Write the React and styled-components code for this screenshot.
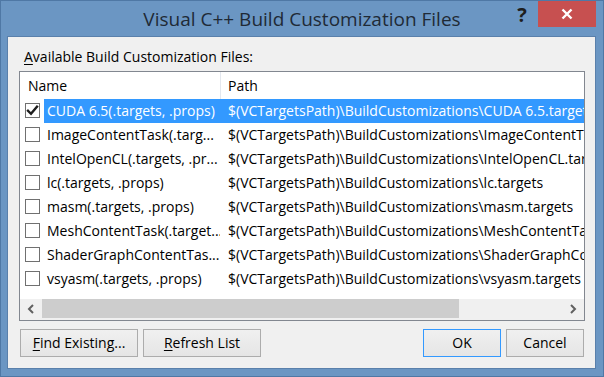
import React from 'react';
import styled, { createGlobalStyle } from 'styled-components';

const Global = createGlobalStyle`
  html, body { margin: 0; padding: 0; background: #6b96c3; }
  body { font-family: "Open Sans", "Noto Sans", sans-serif; }
  * { box-sizing: border-box; }
`;

const Window = styled.div`
  position: relative;
  width: 604px;
  height: 377px;
  background: #6b96c3;
  border: 1px solid #4f78a5;
  display: flex;
  flex-direction: column;
  overflow: hidden;
`;

const TitleBar = styled.div`
  position: relative;
  height: 35px;
  flex: none;
  display: flex;
  align-items: center;
  justify-content: center;
`;

const Title = styled.div`
  font-size: 19px;
  color: #1f2a36;
  line-height: 24px;
  padding-top: 1px;
`;

const HelpButton = styled.div`
  position: absolute;
  left: 514px;
  top: 2px;
  width: 14px;
  height: 24px;
  font-size: 20px;
  font-weight: 700;
  line-height: 24px;
  text-align: center;
  color: #1e1e1e;
`;

const CloseButton = styled.div`
  position: absolute;
  right: 7px;
  top: 0;
  width: 58px;
  height: 26px;
  background: #c75050;
  display: flex;
  align-items: center;
  justify-content: center;
`;

const Client = styled.div`
  margin: 0 7px 7px 6px;
  flex: 1;
  background: #f0f0f0;
  border: 1px solid #5a80ab;
  display: flex;
  flex-direction: column;
`;

const Label = styled.div`
  height: 34px;
  padding: 11px 0 0 16px;
  font-size: 14px;
  line-height: 18px;
  color: #000;
`;

const Mnemonic = styled.span`
  text-decoration: underline;
  text-underline-offset: 2px;
`;

const List = styled.div`
  margin-left: 11px;
  width: 566px;
  height: 250px;
  flex: none;
  border: 1px solid #828790;
  background: #fff;
  display: flex;
  flex-direction: column;
  overflow: hidden;
`;

const Header = styled.div`
  height: 27px;
  flex: none;
  display: flex;
  font-size: 14px;
  color: #000;
`;

const HeaderCell = styled.div`
  width: ${p => (p.$w ? `${p.$w}px` : 'auto')};
  flex: ${p => (p.$w ? 'none' : '1')};
  padding-left: ${p => p.$pad}px;
  line-height: 28px;
  border-right: ${p => (p.$divider ? '1px solid #e3e7ee' : 'none')};
`;

const Rows = styled.div`
  flex: 1;
  display: flex;
  flex-direction: column;
`;

const Row = styled.div`
  height: 24px;
  display: flex;
  font-size: 14px;
  line-height: 24px;
  white-space: nowrap;
`;

const CheckCell = styled.div`
  width: 24px;
  flex: none;
  display: flex;
  align-items: center;
  padding-left: 5px;
`;

const Box = styled.div`
  width: 15px;
  height: 15px;
  margin-top: -2px;
  border: 1px solid #707070;
  background: #fff;
  display: flex;
  align-items: center;
  justify-content: center;
`;

const Cells = styled.div`
  flex: 1;
  display: flex;
  background: ${p => (p.$selected ? '#3399ff' : 'transparent')};
  color: ${p => (p.$selected ? '#fff' : '#000')};
  overflow: hidden;
`;

const NameCell = styled.div`
  width: 176px;
  flex: none;
  padding-left: 3px;
  overflow: hidden;
`;

const PathCell = styled.div`
  flex: 1;
  padding-left: 8px;
  overflow: hidden;
`;

const ScrollBar = styled.div`
  height: 21px;
  flex: none;
  background: #f0f0f0;
  display: flex;
`;

const ArrowButton = styled.div`
  width: 22px;
  flex: none;
  display: flex;
  align-items: center;
  justify-content: center;
  padding-bottom: 2px;
`;

const Thumb = styled.div`
  width: 417px;
  height: 19px;
  flex: none;
  background: #cdcdcd;
`;

const Track = styled.div`
  flex: 1;
`;

const ButtonRow = styled.div`
  display: flex;
  margin-top: 8px;
  padding: 0 11px 0 12px;
  gap: 5px;
`;

const Spacer = styled.div`
  flex: 1;
`;

const Button = styled.div`
  width: ${p => p.$w}px;
  height: 28px;
  border: 1px solid ${p => (p.$default ? '#3399ff' : '#acacac')};
  background: linear-gradient(#f0f0f0, #e5e5e5);
  font-size: 14px;
  line-height: 25px;
  text-align: center;
  color: #000;
`;

const Check = () => (
  <svg width="13" height="13" viewBox="0 0 13 13">
    <path d="M2 6.8 L5 9.8 L11 2.6" fill="none" stroke="#1e1e1e" strokeWidth="2.4" strokeLinecap="square" />
  </svg>
);

const Chevron = ({ dir }) => (
  <svg width="8" height="10" viewBox="0 0 8 10">
    <path d={dir === 'left' ? 'M6 1 L2 5 L6 9' : 'M2 1 L6 5 L2 9'} fill="none" stroke="#606060" strokeWidth="2" />
  </svg>
);

const CloseX = () => (
  <svg width="12" height="12" viewBox="0 0 12 12">
    <path d="M1.5 1.5 L10.5 10.5 M10.5 1.5 L1.5 10.5" stroke="#fff" strokeWidth="2.4" />
  </svg>
);

const PREFIX = '$(VCTargetsPath)\\BuildCustomizations\\';

const items = [
  { name: 'CUDA 6.5(.targets, .props)', path: 'CUDA 6.5.targets', checked: true, selected: true },
  { name: 'ImageContentTask(.targ...', path: 'ImageContentTask.targets' },
  { name: 'IntelOpenCL(.targets, .pr...', path: 'IntelOpenCL.targets' },
  { name: 'lc(.targets, .props)', path: 'lc.targets' },
  { name: 'masm(.targets, .props)', path: 'masm.targets' },
  { name: 'MeshContentTask(.target...', path: 'MeshContentTask.targets' },
  { name: 'ShaderGraphContentTas...', path: 'ShaderGraphContentTask.targets' },
  { name: 'vsyasm(.targets, .props)', path: 'vsyasm.targets' },
];

export default function App() {
  return (
    <>
      <Global />
      <Window>
        <TitleBar>
          <Title>Visual C++ Build Customization Files</Title>
          <HelpButton>?</HelpButton>
          <CloseButton>
            <CloseX />
          </CloseButton>
        </TitleBar>
        <Client>
          <Label>
            <Mnemonic>A</Mnemonic>vailable Build Customization Files:
          </Label>
          <List>
            <Header>
              <HeaderCell $w={201} $pad={8} $divider>Name</HeaderCell>
              <HeaderCell $pad={7}>Path</HeaderCell>
            </Header>
            <Rows>
              {items.map(it => (
                <Row key={it.name}>
                  <CheckCell>
                    <Box>{it.checked && <Check />}</Box>
                  </CheckCell>
                  <Cells $selected={it.selected}>
                    <NameCell>{it.name}</NameCell>
                    <PathCell>{PREFIX + it.path}</PathCell>
                  </Cells>
                </Row>
              ))}
            </Rows>
            <ScrollBar>
              <ArrowButton><Chevron dir="left" /></ArrowButton>
              <Thumb />
              <Track />
              <ArrowButton><Chevron dir="right" /></ArrowButton>
            </ScrollBar>
          </List>
          <ButtonRow>
            <Button $w={118}><Mnemonic>F</Mnemonic>ind Existing...</Button>
            <Button $w={118}><Mnemonic>R</Mnemonic>efresh List</Button>
            <Spacer />
            <Button $w={78} $default>OK</Button>
            <Button $w={78}>Cancel</Button>
          </ButtonRow>
        </Client>
      </Window>
    </>
  );
}
